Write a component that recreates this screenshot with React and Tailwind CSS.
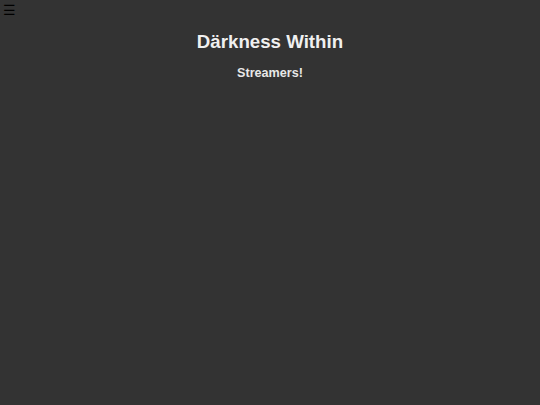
import React from "react";

function App() {
    return (
        <div className="min-h-screen bg-[#333333] font-['Liberation_Sans',Arial,sans-serif] relative">
            <button className="absolute left-[3px] top-[3px] text-black text-[14px] leading-none">☰</button>
            <div className="flex flex-col items-center pt-[31px]">
                <h1 className="text-[18.7px] font-bold text-[#f0f0f0] leading-[22px]">Därkness Within</h1>
                <h2 className="text-[12.6px] font-bold text-[#e8e8e8] mt-[12px] leading-[16px]">Streamers!</h2>
            </div>
        </div>
    );
}

export default App;
